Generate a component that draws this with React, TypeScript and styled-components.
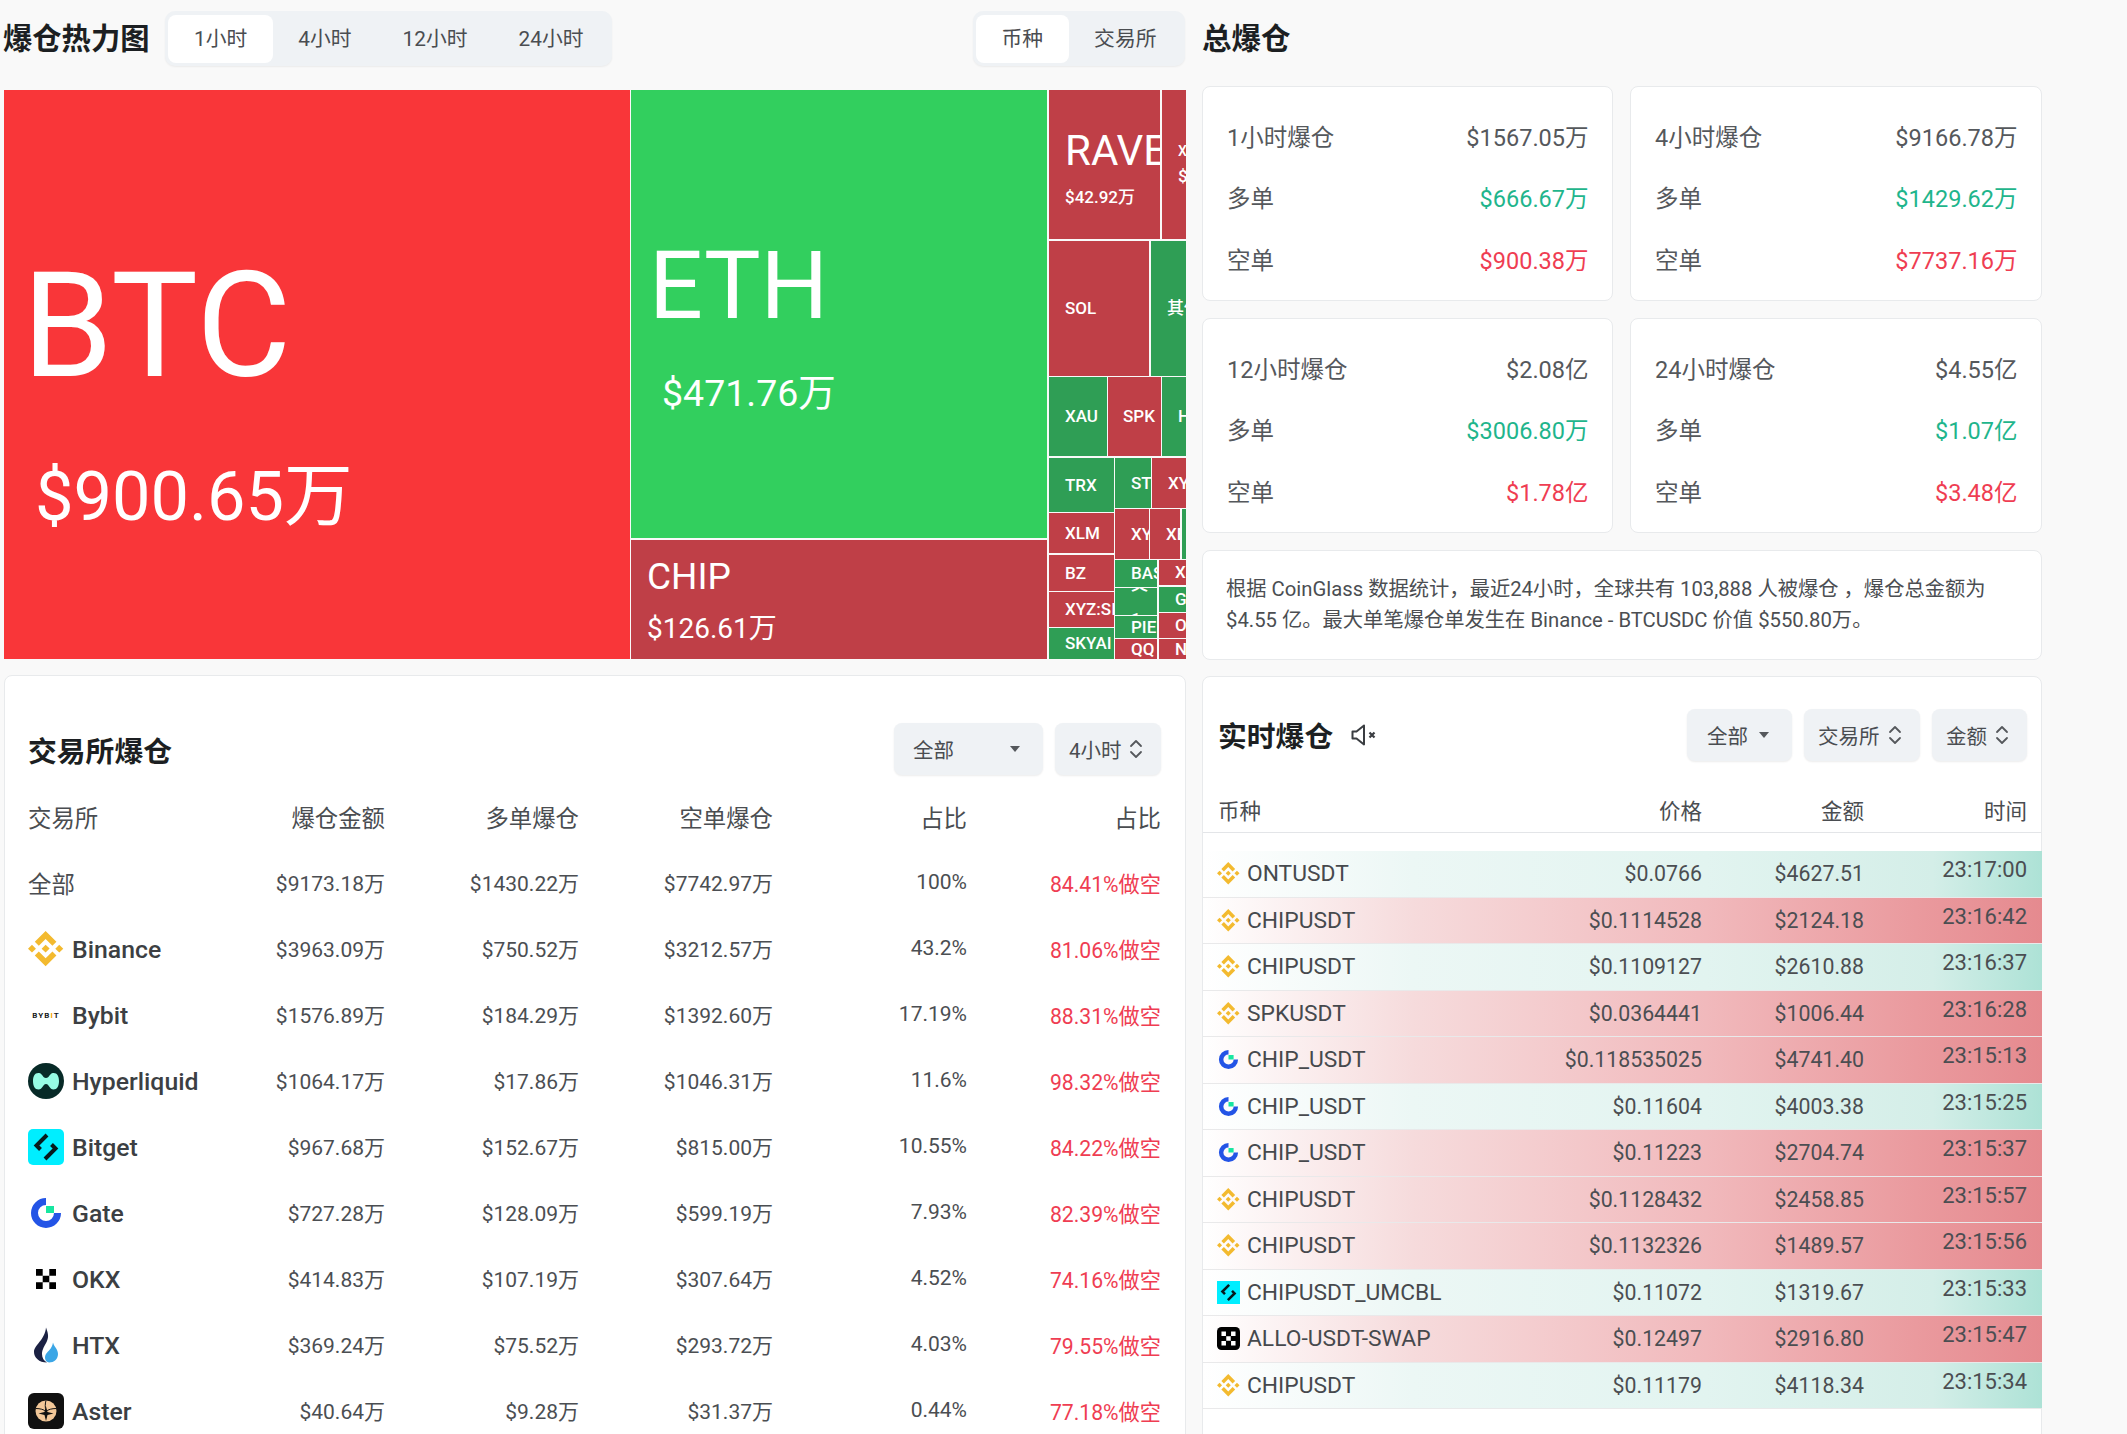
import styled, { createGlobalStyle } from 'styled-components'
import { SiBinance } from 'react-icons/si'
import { ChevronsUpDown } from 'lucide-react'

const RED = '#bf3f47'
const GREEN = '#2f9e55'

type Cell = {
	x: number
	y: number
	w: number
	h: number
	color: string
	name?: string
	value?: string
	nameSize?: number
	valueSize?: number
	gap?: number
	top?: number
	indent?: number
	left?: number
}

const cells: Cell[] = [
	{ x: 0, y: 0, w: 626, h: 569, color: '#f93639', name: 'BTC', value: '$900.65万', nameSize: 146, valueSize: 68.5, gap: 41, top: 28, indent: 13, left: 18 },
	{ x: 627, y: 0, w: 416, h: 448, color: '#32cf5e', name: 'ETH', value: '$471.76万', nameSize: 95, valueSize: 37.5, gap: 28, top: 17, indent: 13, left: 18 },
	{ x: 627, y: 450, w: 416, h: 119, color: RED, name: 'CHIP', value: '$126.61万', nameSize: 37, valueSize: 28, gap: 13, top: 2 },
	{ x: 1045, y: 0, w: 111, h: 149, color: RED, name: 'RAVE', value: '$42.92万', nameSize: 42, gap: 11, top: 4 },
	{ x: 1158, y: 0, w: 24, h: 149, color: RED, name: 'XYZ', value: '$2', nameSize: 14, gap: 6 },
	{ x: 1045, y: 151, w: 100, h: 135, color: RED, name: 'SOL' },
	{ x: 1147, y: 151, w: 35, h: 135, color: GREEN, name: '其他' },
	{ x: 1045, y: 287, w: 58, h: 79, color: GREEN, name: 'XAU' },
	{ x: 1104, y: 287, w: 53, h: 79, color: RED, name: 'SPK', left: 15 },
	{ x: 1158, y: 287, w: 24, h: 79, color: GREEN, name: 'H' },
	{ x: 1045, y: 368, w: 65, h: 54, color: GREEN, name: 'TRX' },
	{ x: 1111, y: 368, w: 36, h: 50, color: GREEN, name: 'ST' },
	{ x: 1148, y: 368, w: 34, h: 50, color: RED, name: 'XY' },
	{ x: 1045, y: 423, w: 65, h: 40, color: RED, name: 'XLM' },
	{ x: 1111, y: 419, w: 34, h: 50, color: RED, name: 'XY' },
	{ x: 1146, y: 419, w: 30, h: 50, color: RED, name: 'XE' },
	{ x: 1178, y: 419, w: 4, h: 50, color: GREEN },
	{ x: 1045, y: 465, w: 65, h: 36, color: RED, name: 'BZ' },
	{ x: 1045, y: 502, w: 65, h: 35, color: RED, name: 'XYZ:SI' },
	{ x: 1045, y: 538, w: 65, h: 31, color: GREEN, name: 'SKYAI' },
	{ x: 1111, y: 470, w: 42, h: 27, color: GREEN, name: 'BAS' },
	{ x: 1155, y: 470, w: 27, h: 25, color: RED, name: 'X' },
	{ x: 1111, y: 498, w: 42, h: 27, color: GREEN, name: '文', value: '1', gap: 14 },
	{ x: 1155, y: 497, w: 27, h: 25, color: GREEN, name: 'G' },
	{ x: 1111, y: 526, w: 42, h: 22, color: GREEN, name: 'PIE' },
	{ x: 1155, y: 523, w: 27, h: 25, color: RED, name: 'O' },
	{ x: 1111, y: 549, w: 42, h: 20, color: RED, name: 'QQ' },
	{ x: 1155, y: 549, w: 27, h: 20, color: RED, name: 'N' },
]

const summary = [
	{ label: '1小时爆仓', total: '$1567.05万', long: '$666.67万', short: '$900.38万' },
	{ label: '4小时爆仓', total: '$9166.78万', long: '$1429.62万', short: '$7737.16万' },
	{ label: '12小时爆仓', total: '$2.08亿', long: '$3006.80万', short: '$1.78亿' },
	{ label: '24小时爆仓', total: '$4.55亿', long: '$1.07亿', short: '$3.48亿' },
]

type LogoName = 'binance' | 'bybit' | 'hyperliquid' | 'bitget' | 'gate' | 'okx' | 'htx' | 'aster' | 'okxDark' | 'bitgetSquare'

const exchanges: { name: string; logo?: LogoName; values: string[]; ratio: string }[] = [
	{ name: '全部', values: ['$9173.18万', '$1430.22万', '$7742.97万', '100%'], ratio: '84.41%做空' },
	{ name: 'Binance', logo: 'binance', values: ['$3963.09万', '$750.52万', '$3212.57万', '43.2%'], ratio: '81.06%做空' },
	{ name: 'Bybit', logo: 'bybit', values: ['$1576.89万', '$184.29万', '$1392.60万', '17.19%'], ratio: '88.31%做空' },
	{ name: 'Hyperliquid', logo: 'hyperliquid', values: ['$1064.17万', '$17.86万', '$1046.31万', '11.6%'], ratio: '98.32%做空' },
	{ name: 'Bitget', logo: 'bitget', values: ['$967.68万', '$152.67万', '$815.00万', '10.55%'], ratio: '84.22%做空' },
	{ name: 'Gate', logo: 'gate', values: ['$727.28万', '$128.09万', '$599.19万', '7.93%'], ratio: '82.39%做空' },
	{ name: 'OKX', logo: 'okx', values: ['$414.83万', '$107.19万', '$307.64万', '4.52%'], ratio: '74.16%做空' },
	{ name: 'HTX', logo: 'htx', values: ['$369.24万', '$75.52万', '$293.72万', '4.03%'], ratio: '79.55%做空' },
	{ name: 'Aster', logo: 'aster', values: ['$40.64万', '$9.28万', '$31.37万', '0.44%'], ratio: '77.18%做空' },
]

const trades: { logo: LogoName; symbol: string; price: string; amount: string; time: string; side: 'long' | 'short' }[] = [
	{ logo: 'binance', symbol: 'ONTUSDT', price: '$0.0766', amount: '$4627.51', time: '23:17:00', side: 'long' },
	{ logo: 'binance', symbol: 'CHIPUSDT', price: '$0.1114528', amount: '$2124.18', time: '23:16:42', side: 'short' },
	{ logo: 'binance', symbol: 'CHIPUSDT', price: '$0.1109127', amount: '$2610.88', time: '23:16:37', side: 'long' },
	{ logo: 'binance', symbol: 'SPKUSDT', price: '$0.0364441', amount: '$1006.44', time: '23:16:28', side: 'short' },
	{ logo: 'gate', symbol: 'CHIP_USDT', price: '$0.118535025', amount: '$4741.40', time: '23:15:13', side: 'short' },
	{ logo: 'gate', symbol: 'CHIP_USDT', price: '$0.11604', amount: '$4003.38', time: '23:15:25', side: 'long' },
	{ logo: 'gate', symbol: 'CHIP_USDT', price: '$0.11223', amount: '$2704.74', time: '23:15:37', side: 'short' },
	{ logo: 'binance', symbol: 'CHIPUSDT', price: '$0.1128432', amount: '$2458.85', time: '23:15:57', side: 'short' },
	{ logo: 'binance', symbol: 'CHIPUSDT', price: '$0.1132326', amount: '$1489.57', time: '23:15:56', side: 'short' },
	{ logo: 'bitgetSquare', symbol: 'CHIPUSDT_UMCBL', price: '$0.11072', amount: '$1319.67', time: '23:15:33', side: 'long' },
	{ logo: 'okxDark', symbol: 'ALLO-USDT-SWAP', price: '$0.12497', amount: '$2916.80', time: '23:15:47', side: 'short' },
	{ logo: 'binance', symbol: 'CHIPUSDT', price: '$0.11179', amount: '$4118.34', time: '23:15:34', side: 'long' },
]

function Logo({ name, size }: { name: LogoName; size: number }) {
	if (name === 'binance') return <SiBinance size={size * 0.98} color="#f3ba2f" />
	if (name === 'bybit') {
		return (
			<BybitMark>
				BYB<i>I</i>T
			</BybitMark>
		)
	}
	return (
		<svg width={size} height={size} viewBox="0 0 36 36">
			{name === 'hyperliquid' && (
				<>
					<circle cx="18" cy="18" r="18" fill="#072a27" />
					<path
						d="M31 18c0 5-2 8.500-5.500 8.500-4 0-4.500-5.500-7.500-5.500s-3.500 5.500-7.500 5.500C7 26.500 5 23 5 18s2-8.500 6-8c3.500.3 3.500 5 7 5s3.500-4.700 7-5c4-.5 6 3 6 8z"
						fill="#97fce4"
					/>
				</>
			)}
			{(name === 'bitget' || name === 'bitgetSquare') && (
				<>
					<rect width="36" height="36" rx={name === 'bitget' ? 5 : 0} fill="#00eeff" />
					<path d="M19 6L8.500 16.500l4 4M17 30l10.500-10.500-4-4" fill="none" stroke="#061a1c" strokeWidth="4" />
				</>
			)}
			{name === 'gate' && (
				<>
					<path d="M18 6.500A11.500 11.500 0 1 0 29.500 18" fill="none" stroke="#2354e6" strokeWidth="7" />
					<rect x="18" y="11" width="8" height="7" fill="#17e6a1" />
				</>
			)}
			{name === 'okx' && (
				<path d="M8 8h6.700v6.700H8zM21.300 8H28v6.700h-6.700zM14.700 14.700h6.600v6.600h-6.600zM8 21.300h6.700V28H8zM21.300 21.300H28V28h-6.700z" fill="#000" />
			)}
			{name === 'okxDark' && (
				<>
					<rect width="36" height="36" rx="7" fill="#000" />
					<path d="M7 7h7v7H7zM22 7h7v7h-7zM14.500 14.500h7v7h-7zM7 22h7v7H7zM22 22h7v7h-7z" fill="#fff" />
				</>
			)}
			{name === 'htx' && (
				<>
					<path d="M18 .5C20 6 21 9.500 19 14 17 18.500 14 22 14 27c0 4 2 7 5 8.500-8 0-13-5-13-10.500C6 18 17 13 18 .5z" fill="#1b2143" />
					<path d="M25 15.500C26 20 30 22 30 27c0 5-4 8.500-9 8.500-4-.5-5-5.500-3-8.500 2-3 6-5 7-11.500z" fill="#3ba6e6" />
				</>
			)}
			{name === 'aster' && (
				<>
					<rect width="36" height="36" rx="6" fill="#111" />
					<circle cx="18" cy="18" r="10.500" fill="#f3c899" />
					<path d="M18 13.500l1.500 5.500 6 1.500-6 1.500L18 28l-1.500-6-6-1.500 6-1.500z" fill="#111" />
					<path d="M8 15.500c4 0 8 1 10 3 2-2 6-3 10-3M18 7.500c-1 3-1 7 0 11" fill="none" stroke="#111" strokeWidth="1" />
				</>
			)}
		</svg>
	)
}

export default function App() {
	return (
		<Page>
			<GlobalStyle />
			<Column>
				<HeatHeader>
					<HeatTitle>爆仓热力图</HeatTitle>
					<TabGroup>
						<Tab $active>1小时</Tab>
						<Tab>4小时</Tab>
						<Tab>12小时</Tab>
						<Tab>24小时</Tab>
					</TabGroup>
					<TabGroup $push>
						<Tab $active>币种</Tab>
						<Tab>交易所</Tab>
					</TabGroup>
				</HeatHeader>
				<Treemap>
					{cells.map((c, i) => (
						<TreeCell
							key={i}
							$color={c.color}
							$gap={c.gap ?? 0}
							$top={c.top ?? 0}
							$left={c.left ?? 16}
							style={{ left: c.x, top: c.y, width: c.w, height: c.h }}
						>
							{c.name && <CellName $size={c.nameSize ?? 17}>{c.name}</CellName>}
							{c.value && (
								<CellValue $size={c.valueSize ?? 17} $indent={c.indent ?? 0}>
									{c.value}
								</CellValue>
							)}
						</TreeCell>
					))}
				</Treemap>
				<ExchangePanel>
					<ExchangeToolbar>
						<ExchangeTitle>交易所爆仓</ExchangeTitle>
						<SelectRow>
							<Select $width={149} $pad={19}>
								全部
								<Caret />
							</Select>
							<Select $width={106} $pad={14}>
								4小时
								<ChevronsUpDown size={24} strokeWidth={1.8} color="#55585c" />
							</Select>
						</SelectRow>
					</ExchangeToolbar>
					<ExchangeRow>
						<HeadCell $left>交易所</HeadCell>
						<HeadCell>爆仓金额</HeadCell>
						<HeadCell>多单爆仓</HeadCell>
						<HeadCell>空单爆仓</HeadCell>
						<HeadCell>占比</HeadCell>
						<HeadCell>占比</HeadCell>
					</ExchangeRow>
					{exchanges.map((ex) => (
						<ExchangeRow key={ex.name}>
							{ex.logo ? (
								<ExchangeName>
									<LogoBox $size={36}>
										<Logo name={ex.logo} size={36} />
									</LogoBox>
									{ex.name}
								</ExchangeName>
							) : (
								<AllName>{ex.name}</AllName>
							)}
							{ex.values.map((v, i) => (
								<ValueCell key={i}>{v}</ValueCell>
							))}
							<RatioCell>{ex.ratio}</RatioCell>
						</ExchangeRow>
					))}
				</ExchangePanel>
			</Column>
			<Column>
				<SummaryTitle>总爆仓</SummaryTitle>
				<CardGrid>
					{summary.map((s) => (
						<Card key={s.label}>
							<CardRow>
								<span>{s.label}</span>
								<span>{s.total}</span>
							</CardRow>
							<CardRow>
								<span>多单</span>
								<Amount $tone="#1fb58c">{s.long}</Amount>
							</CardRow>
							<CardRow>
								<span>空单</span>
								<Amount $tone="#ef3d52">{s.short}</Amount>
							</CardRow>
						</Card>
					))}
				</CardGrid>
				<Description>
					根据 CoinGlass 数据统计，最近24小时，全球共有 103,888 人被爆仓 ，爆仓总金额为 $4.55 亿。最大单笔爆仓单发生在 Binance - BTCUSDC 价值 $550.80万。
				</Description>
				<LivePanel>
					<LiveToolbar>
						<LiveTitle>
							<LiveHeading>实时爆仓</LiveHeading>
							<svg width="26" height="24" viewBox="0 0 26 24" fill="none" stroke="#3a3d41">
								<path d="M1.500 8.500v7h4l7.500 6V2.500l-7.500 6z" strokeWidth="2" strokeLinejoin="round" />
								<path d="M18.500 9.500l5 5M23.500 9.500l-5 5" strokeWidth="2.200" />
							</svg>
						</LiveTitle>
						<SelectRow>
							<Select $width={105} $pad={20}>
								全部
								<Caret />
							</Select>
							<Select $width={116} $pad={14}>
								交易所
								<ChevronsUpDown size={24} strokeWidth={1.8} color="#55585c" />
							</Select>
							<Select $width={95} $pad={14}>
								金额
								<ChevronsUpDown size={24} strokeWidth={1.8} color="#55585c" />
							</Select>
						</SelectRow>
					</LiveToolbar>
					<LiveHead>
						<LiveHeadCell $left>币种</LiveHeadCell>
						<LiveHeadCell>价格</LiveHeadCell>
						<LiveHeadCell>金额</LiveHeadCell>
						<LiveHeadCell>时间</LiveHeadCell>
					</LiveHead>
					<TradeList>
						{trades.map((t, i) => (
							<TradeRow key={i} $side={t.side}>
								<TradeSymbol>
									<LogoBox $size={23}>
										<Logo name={t.logo} size={23} />
									</LogoBox>
									{t.symbol}
								</TradeSymbol>
								<TradeValue>{t.price}</TradeValue>
								<TradeValue>{t.amount}</TradeValue>
								<TradeTime>{t.time}</TradeTime>
							</TradeRow>
						))}
					</TradeList>
				</LivePanel>
			</Column>
		</Page>
	)
}

const GlobalStyle = createGlobalStyle`
	html, body {
		margin: 0;
		height: 1434px;
		overflow: hidden;
		background: #f9f9f9;
	}
	body {
		font-family: Roboto, "Noto Sans CJK SC", sans-serif;
		color: #44474b;
	}
`
const Page = styled.div`
	display: grid;
	grid-template-columns: 1182px 840px;
	column-gap: 16px;
	padding-left: 4px;
	height: 1434px;
	overflow: hidden;
`
const Column = styled.div`
	display: flex;
	flex-direction: column;
	min-width: 0;
`
const HeatHeader = styled.div`
	display: flex;
	align-items: center;
	height: 55px;
	margin: 11px 0 24px;
`
const HeatTitle = styled.h1`
	margin: 0 16px 0 -1px;
	padding-top: 2px;
	font-size: 29.3px;
	line-height: 53px;
	font-weight: 700;
	color: #1c1f22;
`
const TabGroup = styled.div<{ $push?: boolean }>`
	display: flex;
	height: 55px;
	padding: 4px 3px 3px;
	box-sizing: border-box;
	margin-left: ${(p) => (p.$push ? 'auto' : '0')};
	margin-right: ${(p) => (p.$push ? '1px' : '0')};
	background: #eff2f5;
	border-radius: 10px;
	box-shadow: 0 1px 2px rgba(0, 0, 0, 0.06);
`
const Tab = styled.div<{ $active?: boolean }>`
	padding: 0 25.5px;
	line-height: 48px;
	font-size: 20.8px;
	color: #4a4d51;
	border-radius: 8px;
	background: ${(p) => (p.$active ? '#fff' : 'transparent')};
`
const Treemap = styled.div`
	position: relative;
	height: 569px;
	flex: none;
	overflow: hidden;
	background: #f9f9f9;
`
const TreeCell = styled.div<{ $color: string; $gap: number; $top: number; $left: number }>`
	position: absolute;
	display: flex;
	flex-direction: column;
	justify-content: center;
	gap: ${(p) => p.$gap}px;
	padding: ${(p) => p.$top}px 0 0 ${(p) => p.$left}px;
	box-sizing: border-box;
	overflow: hidden;
	background: ${(p) => p.$color};
	color: #fff;
	white-space: nowrap;
`
const CellName = styled.div<{ $size: number }>`
	flex: none;
	font-size: ${(p) => p.$size}px;
	line-height: 1.2;
	font-weight: ${(p) => (p.$size > 30 ? 400 : 500)};
`
const CellValue = styled.div<{ $size: number; $indent: number }>`
	flex: none;
	margin-left: ${(p) => p.$indent}px;
	font-size: ${(p) => p.$size}px;
	line-height: 1.2;
	font-weight: ${(p) => (p.$size > 20 ? 400 : 500)};
`
const Panel = styled.div`
	flex: none;
	height: 800px;
	box-sizing: border-box;
	margin-top: 16px;
	background: #fff;
	border: 1px solid #e8eaec;
	border-radius: 8px;
`
const ExchangePanel = styled(Panel)`
	padding: 47px 24px 0 23px;
`
const ExchangeToolbar = styled.div`
	display: flex;
	align-items: center;
	justify-content: space-between;
	height: 52px;
	margin-bottom: 9px;
`
const PanelTitle = styled.h2`
	margin: 0;
	font-size: 28.8px;
	line-height: 40px;
	font-weight: 700;
	color: #1c1f22;
`
const ExchangeTitle = styled(PanelTitle)`
	padding-top: 5px;
`
const LiveHeading = styled(PanelTitle)`
	padding-top: 4px;
`
const SelectRow = styled.div`
	display: flex;
	gap: 12px;
`
const Select = styled.div<{ $width: number; $pad: number }>`
	display: flex;
	align-items: center;
	justify-content: space-between;
	width: ${(p) => p.$width}px;
	height: 52px;
	box-sizing: border-box;
	padding: 0 13px 0 ${(p) => p.$pad}px;
	font-size: 20.5px;
	color: #4a4d51;
	background: #eff2f5;
	border-radius: 8px;
	box-shadow: 0 1px 2px rgba(0, 0, 0, 0.08);
`
const Caret = styled.span`
	width: 0;
	height: 0;
	margin-right: 10px;
	border-left: 5.5px solid transparent;
	border-right: 5.5px solid transparent;
	border-top: 6px solid #55585c;
`
const ExchangeRow = styled.div`
	display: grid;
	grid-template-columns: 163px repeat(5, 194px);
	height: 66px;
	align-items: center;
	white-space: nowrap;
`
const HeadCell = styled.div<{ $left?: boolean }>`
	text-align: ${(p) => (p.$left ? 'left' : 'right')};
	font-size: 23.4px;
	color: #4a4d51;
`
const ExchangeName = styled.div`
	display: flex;
	align-items: center;
	gap: 8px;
	font-size: 24.8px;
	font-weight: 500;
	color: #3c3f43;
`
const AllName = styled.div`
	font-size: 23.4px;
	color: #4a4d51;
`
const LogoBox = styled.span<{ $size: number }>`
	display: flex;
	align-items: center;
	justify-content: center;
	flex: none;
	width: ${(p) => p.$size}px;
	height: ${(p) => p.$size}px;
`
const BybitMark = styled.span`
	font-size: 8px;
	font-weight: 700;
	letter-spacing: 1.1px;
	color: #17181c;
	i {
		font-style: normal;
		color: #f7a600;
	}
`
const ValueCell = styled.div`
	padding-bottom: 2px;
	text-align: right;
	font-size: 21px;
	color: #4b4e52;
`
const RatioCell = styled(ValueCell)`
	font-size: 21.2px;
	color: #ef3d52;
`
const SummaryTitle = styled.h2`
	margin: 12px 0 19px;
	font-size: 29.5px;
	line-height: 55px;
	font-weight: 700;
	color: #1c1f22;
`
const CardGrid = styled.div`
	display: grid;
	grid-template-columns: 411px 412px;
	grid-auto-rows: 215px;
	gap: 17px;
`
const Card = styled.div`
	padding: 18px 23.5px 0 24px;
	box-sizing: border-box;
	background: #fff;
	border: 1px solid #e8eaec;
	border-radius: 8px;
`
const CardRow = styled.div`
	display: flex;
	align-items: center;
	justify-content: space-between;
	height: 61.5px;
	font-size: 23.5px;
	color: #55585c;
`
const Amount = styled.span<{ $tone: string }>`
	color: ${(p) => p.$tone};
`
const Description = styled.div`
	height: 110px;
	margin-top: 17px;
	padding: 23px 23px 0;
	box-sizing: border-box;
	font-size: 20.3px;
	line-height: 31px;
	color: #4b4e52;
	background: #fff;
	border: 1px solid #e8eaec;
	border-radius: 8px;
`
const LivePanel = styled(Panel)`
	padding-top: 32px;
`
const LiveToolbar = styled.div`
	display: flex;
	align-items: center;
	justify-content: space-between;
	padding: 0 14px 0 15px;
`
const LiveTitle = styled.div`
	display: flex;
	align-items: center;
	gap: 18px;
`
const LiveHead = styled.div`
	display: grid;
	grid-template-columns: 1fr 162px 162px 163px;
	align-items: center;
	height: 42px;
	box-sizing: border-box;
	margin-top: 30px;
	padding: 0 14px 5px 15px;
	border-bottom: 1px solid #e3e5e8;
`
const LiveHeadCell = styled.div<{ $left?: boolean }>`
	text-align: ${(p) => (p.$left ? 'left' : 'right')};
	font-size: 21.5px;
	color: #4a4d51;
`
const TradeList = styled.div`
	margin: 18px -1px 0 0;
`
const TradeRow = styled.div<{ $side: 'long' | 'short' }>`
	display: grid;
	grid-template-columns: 1fr 162px 162px 163px;
	align-items: center;
	height: 46.5px;
	box-sizing: border-box;
	padding: 0 15px 0 14px;
	border-bottom: 1px solid #e9e9ea;
	background: ${(p) =>
		p.$side === 'long'
			? 'linear-gradient(90deg, #fff 0%, #ecf7f5 25%, #e2f4f0 60%, #d4eee8 87%, #ade2d6 100%)'
			: 'linear-gradient(90deg, #fff 0%, #f6dbdc 25%, #f1b9bc 60%, #ea9a9e 85%, #e58a8f 100%)'};
`
const TradeSymbol = styled.div`
	display: flex;
	align-items: center;
	gap: 7px;
	font-size: 22.8px;
	color: #46494d;
`
const TradeValue = styled.div`
	text-align: right;
	font-size: 21.3px;
	color: #4b4e52;
`
const TradeTime = styled(TradeValue)`
	font-size: 22px;
	padding-bottom: 8px;
`
